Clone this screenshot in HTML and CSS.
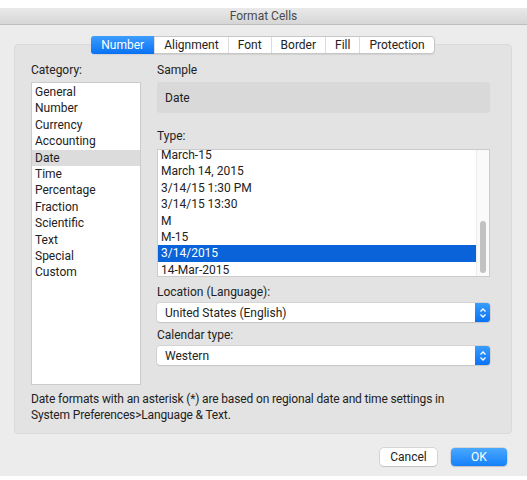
FILE: index.html
```html
<!DOCTYPE html>
<html lang="en">

<head>
  <meta charset="UTF-8">
  <title>Format Cells</title>
  <link rel="stylesheet" href="styles.css">
</head>

<body>
  <div class="window">
    <div class="titlebar">Format Cells</div>

    <div class="group">
      <div class="tabs">
        <div class="tab active">Number</div>
        <div class="tab">Alignment</div>
        <div class="tab">Font</div>
        <div class="tab">Border</div>
        <div class="tab">Fill</div>
        <div class="tab">Protection</div>
      </div>

      <div class="columns">
        <div class="left">
          <div class="label">Category:</div>
          <div class="list category">
            <div class="row">General</div>
            <div class="row">Number</div>
            <div class="row">Currency</div>
            <div class="row">Accounting</div>
            <div class="row sel-gray">Date</div>
            <div class="row">Time</div>
            <div class="row">Percentage</div>
            <div class="row">Fraction</div>
            <div class="row">Scientific</div>
            <div class="row">Text</div>
            <div class="row">Special</div>
            <div class="row">Custom</div>
          </div>
        </div>

        <div class="right">
          <div class="label">Sample</div>
          <div class="sample">Date</div>

          <div class="label type-label">Type:</div>
          <div class="list types">
            <div class="rows">
              <div class="row">March-15</div>
              <div class="row">March 14, 2015</div>
              <div class="row">3/14/15 1:30 PM</div>
              <div class="row">3/14/15 13:30</div>
              <div class="row">M</div>
              <div class="row">M-15</div>
              <div class="row sel-blue">3/14/2015</div>
              <div class="row">14-Mar-2015</div>
            </div>
            <div class="scrollbar">
              <div class="thumb"></div>
            </div>
          </div>

          <div class="label loc-label">Location (Language):</div>
          <div class="select">
            <span>United States (English)</span>
            <div class="arrows">
              <svg width="8" height="12" viewBox="0 0 8 12">
                <path d="M1.5 4.5 L4 2 L6.5 4.5 M1.5 7.5 L4 10 L6.5 7.5" fill="none" stroke="#fff" stroke-width="1.3" />
              </svg>
            </div>
          </div>

          <div class="label cal-label">Calendar type:</div>
          <div class="select">
            <span>Western</span>
            <div class="arrows">
              <svg width="8" height="12" viewBox="0 0 8 12">
                <path d="M1.5 4.5 L4 2 L6.5 4.5 M1.5 7.5 L4 10 L6.5 7.5" fill="none" stroke="#fff" stroke-width="1.3" />
              </svg>
            </div>
          </div>
        </div>
      </div>

      <p class="note">Date formats with an asterisk (*) are based on regional date and time settings in<br>System Preferences&gt;Language &amp; Text.</p>
    </div>

    <div class="buttons">
      <button class="btn">Cancel</button>
      <button class="btn primary">OK</button>
    </div>
  </div>
</body>

</html>
```

FILE: styles.css
```css
* {
  box-sizing: border-box;
  margin: 0;
  padding: 0;
}

body {
  background: #fff;
  font-family: Roboto, 'Liberation Sans', sans-serif;
  font-size: 12px;
  color: #222;
}

.window {
  margin-top: 8px;
  height: 468px;
  background: #ececec;
}

.titlebar {
  height: 17px;
  line-height: 17px;
  text-align: center;
  color: #4a4a4a;
  background: linear-gradient(#e9e9e9, #d6d6d6);
  border-bottom: 1px solid #bdbdbd;
}

.group {
  margin: 19px 15px 0 14px;
  height: 390px;
  background: #e3e3e3;
  border: 1px solid #dadada;
  border-radius: 4px;
  padding: 0 16px;
}

.tabs {
  display: flex;
  width: fit-content;
  margin: -9px auto 0;
  height: 18px;
  background: #fff;
  border: 1px solid #c6c6c6;
  border-radius: 4px;
  box-shadow: 0 1px 1px rgba(0, 0, 0, .08);
}

.tab {
  line-height: 16px;
  padding: 0 9px;
  border-left: 1px solid #dcdcdc;
}

.tab:first-child {
  border-left: none;
}

.tab.active {
  background: linear-gradient(#3d9dfd, #0872f4);
  color: #fff;
  border-radius: 3px 0 0 3px;
  margin: -1px 0 -1px -1px;
  line-height: 18px;
  padding: 0 10px;
}

.columns {
  display: flex;
  gap: 16px;
  margin-top: 9px;
}

.left {
  width: 110px;
}

.right {
  width: 333px;
}

.label {
  height: 19px;
  line-height: 15px;
}

.list {
  background: #fff;
  border: 1px solid #cbcbcb;
}

.category {
  height: 303px;
  padding-top: 1px;
}

.row {
  height: 16.4px;
  line-height: 16.4px;
  padding-left: 3px;
  white-space: nowrap;
}

.sel-gray {
  background: #dcdcdc;
}

.sel-blue {
  background: #0a63d8;
  color: #fff;
}

.sample {
  height: 31px;
  line-height: 32px;
  background: #d9d9d9;
  border-radius: 3px;
  padding-left: 8px;
}

.type-label {
  margin-top: 16px;
  height: 20px;
}

.types {
  height: 128px;
  display: flex;
  overflow: hidden;
}

.rows {
  flex: 1;
  margin-top: -3px;
}

.scrollbar {
  width: 13px;
  background: #fafafa;
  border-left: 1px solid #ececec;
  padding: 71px 3px 3px 3px;
}

.thumb {
  height: 52px;
  background: #c2c2c2;
  border-radius: 4px;
}

.loc-label {
  margin-top: 8px;
  height: 18px;
}

.cal-label {
  margin-top: 6px;
  height: 18px;
}

.select {
  height: 19px;
  display: flex;
  align-items: center;
  background: #fff;
  border-radius: 3px;
  box-shadow: 0 0 0 .5px #c4c4c4, 0 1px 1px rgba(0, 0, 0, .12);
}

.select span {
  flex: 1;
  padding-left: 8px;
}

.arrows {
  width: 15px;
  height: 19px;
  background: linear-gradient(#3a9cfd, #0a73f5);
  border-radius: 0 3px 3px 0;
  display: flex;
  align-items: center;
  justify-content: center;
}

.note {
  margin-top: 6px;
  line-height: 16px;
  white-space: nowrap;
  letter-spacing: -0.15px;
}

.buttons {
  display: flex;
  justify-content: flex-end;
  gap: 14px;
  margin: 14px 20px 0 0;
}

.btn {
  width: 57px;
  height: 18px;
  font: inherit;
  color: #222;
  background: #fff;
  border: none;
  border-radius: 4px;
  box-shadow: 0 0 0 .5px #bdbdbd, 0 1px 1px rgba(0, 0, 0, .15);
}

.btn.primary {
  width: 56px;
  color: #fff;
  background: linear-gradient(#4aa8fe, #1581fa);
}
```
